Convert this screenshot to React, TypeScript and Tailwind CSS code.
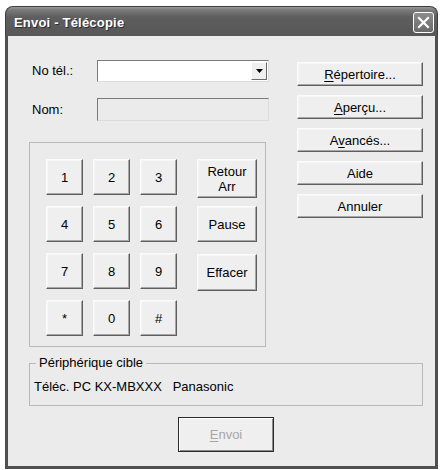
import React from "react";

const font = { fontFamily: '"Liberation Sans", Arial, sans-serif' };

const btn =
  "flex items-center justify-center bg-[#efefef] border border-t-[#fbfbfb] border-l-[#fbfbfb] border-b-[#5e5e5e] border-r-[#5e5e5e] shadow-[inset_-1px_-1px_0_#a8a8a8,inset_1px_1px_0_#f6f6f6] text-[13px] leading-[15px] text-black text-center";

function Key({ label }: { label: string }) {
  return <div className={`${btn} w-[37px] h-[36px]`}>{label}</div>;
}

function SideBtn({ children }: { children: React.ReactNode }) {
  return <div className={`${btn} w-[126px] h-[24px]`}>{children}</div>;
}

export default function App() {
  return (
    <div className="w-[440px] h-[470px] bg-white pt-[6px] pl-[5px]" style={font}>
      <div className="w-[433px] h-[463px] flex flex-col">
        {/* title bar */}
        <div className="h-[30px] rounded-t-[8px] bg-[linear-gradient(to_bottom,#9a9a9a_0px,#7a7a7a_3px,#5e5e5e_10px,#575757_100%)] border-t border-x border-[#3e3e3e] flex items-center justify-between pl-[8px] pr-[3px]">
          <span className="text-white font-bold text-[13px] tracking-[0.2px] mt-[2px] [text-shadow:1px_1px_0_#2e2e2e]">
            Envoi - Télécopie
          </span>
          <div className="w-[21px] h-[21px] mt-[2px] rounded-[3px] border border-white bg-[linear-gradient(to_bottom,#8c8c8c,#6a6a6a)] flex items-center justify-center">
            <svg width="13" height="13" viewBox="0 0 13 13">
              <path d="M2 2 L11 11 M11 2 L2 11" stroke="white" strokeWidth="2.2" strokeLinecap="square" />
            </svg>
          </div>
        </div>
        {/* client */}
        <div className="flex-1 bg-[#ebebeb] border-x-[3px] border-b-[3px] border-[#4f4f4f] flex flex-col">
          <div className="flex pt-[24px] pl-[21px]">
            {/* left column */}
            <div className="w-[240px] flex flex-col">
              <div className="flex items-center h-[22px]">
                <span className="w-[68px] pl-[3px] text-[13px] text-black">No tél.:</span>
                <div className="w-[172px] h-[22px] bg-white border border-t-[#7a7a7a] border-l-[#7a7a7a] border-b-[#dcdcdc] border-r-[#dcdcdc] flex justify-end items-center pr-[1px]">
                  <div className="w-[16px] h-[18px] bg-[#efefef] border border-t-white border-l-white border-b-[#6a6a6a] border-r-[#6a6a6a] flex items-center justify-center">
                    <svg width="7" height="4" viewBox="0 0 7 4">
                      <path d="M0 0 H7 L3.5 4 Z" fill="black" />
                    </svg>
                  </div>
                </div>
              </div>
              <div className="flex items-center h-[23px] mt-[16px]">
                <span className="w-[68px] pl-[3px] text-[13px] text-black">Nom:</span>
                <div className="w-[172px] h-[23px] bg-[#ebebeb] border border-t-[#7a7a7a] border-l-[#7a7a7a] border-b-[#dcdcdc] border-r-[#dcdcdc]" />
              </div>
              {/* keypad group */}
              <div className="mt-[21px] w-[237px] h-[205px] border border-[#b9b9b9] pt-[16px] pl-[16px] flex">
                <div className="grid grid-cols-[37px_37px_37px] gap-x-[10px] gap-y-[11px] content-start">
                  {["1", "2", "3", "4", "5", "6", "7", "8", "9", "*", "0", "#"].map((k) => (
                    <Key key={k} label={k} />
                  ))}
                </div>
                <div className="ml-[20px] flex flex-col">
                  <div className={`${btn} w-[60px] h-[39px] flex-col`}>
                    <span>Retour</span>
                    <span>Arr</span>
                  </div>
                  <div className={`${btn} w-[60px] h-[36px] mt-[8px]`}>Pause</div>
                  <div className={`${btn} w-[60px] h-[37px] mt-[12px]`}>Effacer</div>
                </div>
              </div>
            </div>
            {/* right column */}
            <div className="ml-[28px] mt-[2px] flex flex-col gap-[9px]">
              <SideBtn>
                <span>
                  <span className="underline underline-offset-2">R</span>épertoire...
                </span>
              </SideBtn>
              <SideBtn>
                <span>
                  <span className="underline underline-offset-2">A</span>perçu...
                </span>
              </SideBtn>
              <SideBtn>
                <span>
                  A<span className="underline underline-offset-2">v</span>ancés...
                </span>
              </SideBtn>
              <SideBtn>Aide</SideBtn>
              <SideBtn>Annuler</SideBtn>
            </div>
          </div>
          {/* target device group */}
          <fieldset className="ml-[21px] mt-[9px] w-[394px] border border-[#b9b9b9] pl-[4px] pt-[9px] pb-[11px]">
            <legend className="ml-[2px] px-[3px] text-[13px] leading-[14px] text-black">Périphérique cible</legend>
            <div className="text-[13px] leading-[15px] text-black whitespace-pre">Téléc. PC KX-MBXXX   Panasonic</div>
          </fieldset>
          <div className="ml-[21px] w-[394px] mt-[11px] flex justify-center">
            <div className="w-[96px] h-[35px] flex items-center justify-center bg-[#efefef] border border-[#2a2a2a] shadow-[inset_1px_1px_0_#ffffff,inset_-1px_-1px_0_#8a8a8a] text-[13px] text-[#a6a6a6]">
              <span>
                <span className="underline underline-offset-2">E</span>nvoi
              </span>
            </div>
          </div>
        </div>
      </div>
    </div>
  );
}
